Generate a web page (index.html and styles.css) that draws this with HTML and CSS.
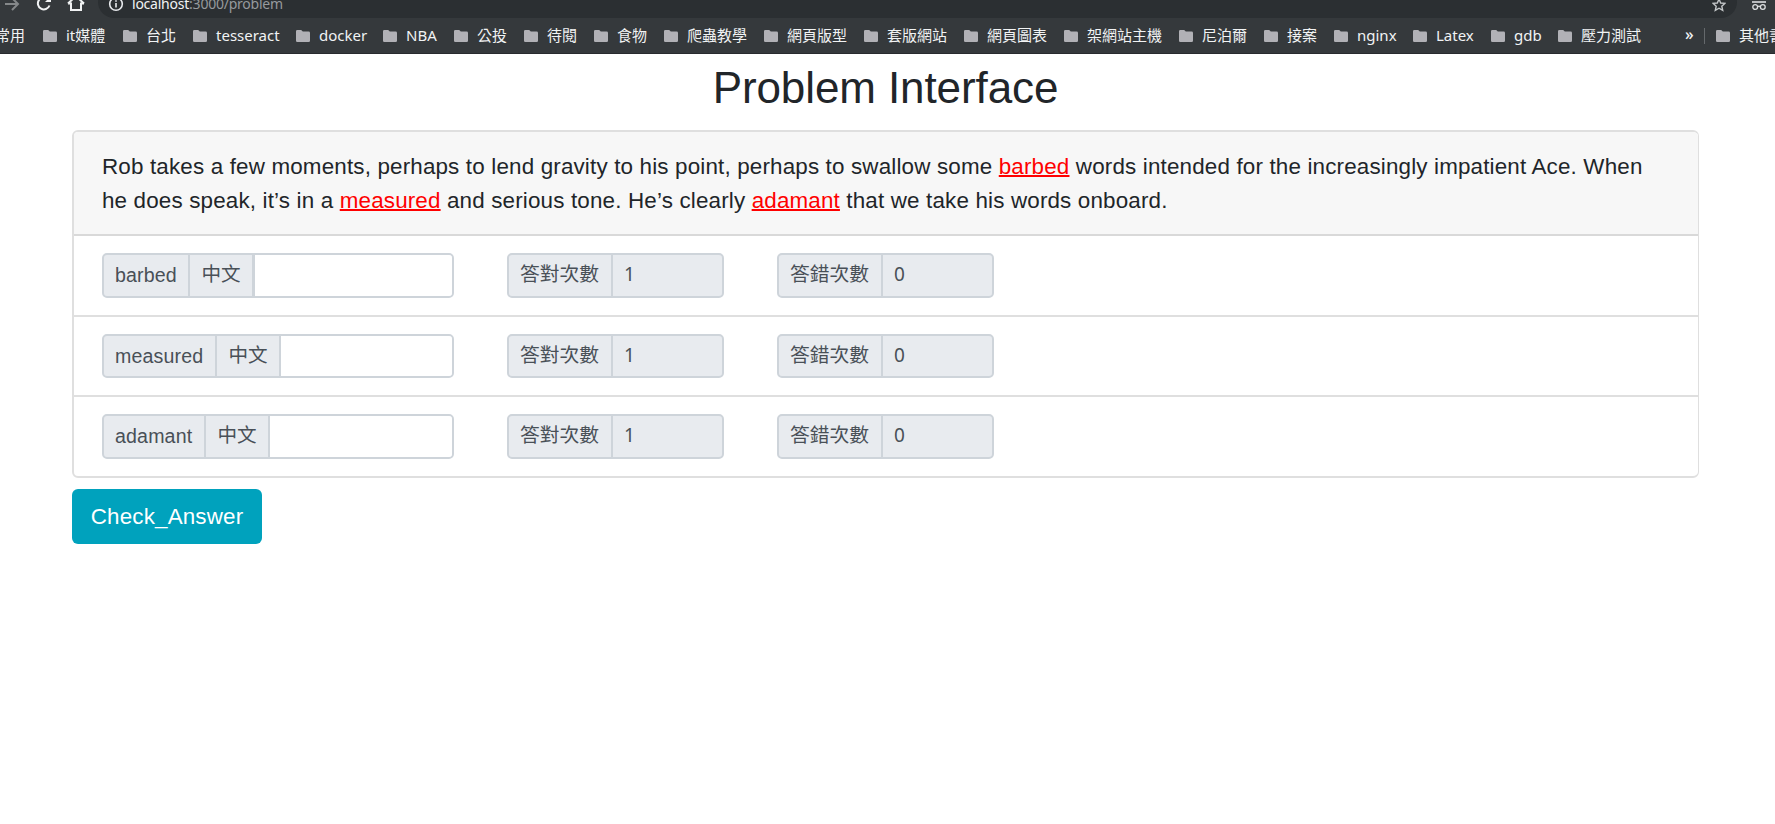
FILE: index.html
```html
<!DOCTYPE html>
<html lang="zh-Hant">
<head>
<meta charset="utf-8">
<title>Problem Interface</title>
<link rel="stylesheet" href="styles.css">
</head>
<body>
<svg class="defs" width="0" height="0"><symbol id="folder" viewBox="0 0 14 12"><path d="M1.3 0H5.2L6.8 1.6H12.7Q14 1.6 14 2.9V10.7Q14 12 12.7 12H1.3Q0 12 0 10.7V1.3Q0 0 1.3 0Z"/></symbol></svg>
<header class="chrome">
  <div class="toolbar">
    <svg class="nav" width="98" height="18" viewBox="0 0 98 18" fill="none" stroke="#f1f3f4" stroke-width="2">
      <path stroke="#85888a" d="M5 4H17M12 -2L18 4L12 10"/>
      <path d="M49.5 5.5A6 6 0 1 1 48 -1"/><path fill="#f1f3f4" stroke="none" d="M45 2H51V-4Z"/>
      <path d="M68 3.5H71V10H81V3.5H84M68 3.5L76 -4L84 3.5"/>
    </svg>
    <div class="omnibox">
      <svg width="16" height="16" viewBox="0 0 16 16" fill="none" stroke="#e8eaed" stroke-width="1.6"><circle cx="8" cy="8" r="6.3"/><path d="M8 7V11.5M8 4.2V5.8"/></svg>
      <span class="url"><b>localhost</b>:3000/problem</span>
      <svg class="star" width="14" height="14" viewBox="0 0 14 14" fill="none" stroke="#c4c7c9" stroke-width="1.4"><path d="M7 1.2L8.7 5L12.9 5.4L9.8 8.2L10.7 12.4L7 10.2L3.3 12.4L4.2 8.2L1.1 5.4L5.3 5Z"/></svg>
    </div>
    <svg class="incognito" width="14" height="12" viewBox="0 0 14 12" fill="none" stroke="#dcdee0" stroke-width="1.3"><path d="M0 2H14" stroke-width="1.6"/><circle cx="3.2" cy="7" r="2.4"/><circle cx="10.8" cy="7" r="2.4"/><path d="M5.6 6.6Q7 5.8 8.4 6.6"/></svg>
  </div>
  <nav class="bookmarks">
    <span class="item first">常用</span>
    <span class="item"><svg><use href="#folder"/></svg>it媒體</span>
    <span class="item"><svg><use href="#folder"/></svg>台北</span>
    <span class="item"><svg><use href="#folder"/></svg>tesseract</span>
    <span class="item"><svg><use href="#folder"/></svg>docker</span>
    <span class="item"><svg><use href="#folder"/></svg>NBA</span>
    <span class="item"><svg><use href="#folder"/></svg>公投</span>
    <span class="item"><svg><use href="#folder"/></svg>待閱</span>
    <span class="item"><svg><use href="#folder"/></svg>食物</span>
    <span class="item"><svg><use href="#folder"/></svg>爬蟲教學</span>
    <span class="item"><svg><use href="#folder"/></svg>網頁版型</span>
    <span class="item"><svg><use href="#folder"/></svg>套版網站</span>
    <span class="item"><svg><use href="#folder"/></svg>網頁圖表</span>
    <span class="item"><svg><use href="#folder"/></svg>架網站主機</span>
    <span class="item"><svg><use href="#folder"/></svg>尼泊爾</span>
    <span class="item"><svg><use href="#folder"/></svg>接案</span>
    <span class="item"><svg><use href="#folder"/></svg>nginx</span>
    <span class="item"><svg><use href="#folder"/></svg>Latex</span>
    <span class="item"><svg><use href="#folder"/></svg>gdb</span>
    <span class="item"><svg><use href="#folder"/></svg>壓力測試</span>
    <span class="more">»</span>
    <span class="item other"><svg><use href="#folder"/></svg>其他書籤</span>
  </nav>
</header>
<main class="page">
  <h1>Problem Interface</h1>
  <section class="card">
    <p class="passage">Rob takes a few moments, perhaps to lend gravity to his point, perhaps to swallow some <u>barbed</u> words intended for the increasingly impatient Ace. When<br>he does speak, it’s in a <u>measured</u> and serious tone. He’s clearly <u>adamant</u> that we take his words onboard.</p>
    <div class="row">
      <div class="group word"><span class="w1">barbed</span><span class="zh zh1">中文</span><input type="text"></div>
      <div class="group count"><span>答對次數</span><output>1</output></div>
      <div class="group count"><span>答錯次數</span><output>0</output></div>
    </div>
    <div class="row middle">
      <div class="group word"><span class="w2">measured</span><span class="zh">中文</span><input type="text"></div>
      <div class="group count"><span>答對次數</span><output>1</output></div>
      <div class="group count"><span>答錯次數</span><output>0</output></div>
    </div>
    <div class="row">
      <div class="group word"><span class="w3">adamant</span><span class="zh">中文</span><input type="text"></div>
      <div class="group count"><span>答對次數</span><output>1</output></div>
      <div class="group count"><span>答錯次數</span><output>0</output></div>
    </div>
  </section>
  <button class="check">Check_Answer</button>
</main>
</body>
</html>
```
FILE: styles.css
```css
* { box-sizing: border-box; }
body { margin: 0; height: 824px; overflow: hidden; background: #fff; color: #212529; font-family: "Liberation Sans", "Noto Sans CJK TC", sans-serif; }
.defs { display: block; }
.chrome { height: 54px; background: #35393c; border-bottom: 1px solid #282b2e; overflow: hidden; color: #f1f3f4; font-family: "Noto Sans", "Noto Sans CJK TC", sans-serif; }
.toolbar { display: flex; height: 18px; }
.nav { flex: none; }
.omnibox { display: flex; flex: none; width: 1639px; height: 18px; background: #2b2f32; border-radius: 0 0 16px 16px; padding-left: 10px; overflow: hidden; }
.omnibox svg { flex: none; margin-top: -4px; }
.url { margin: -6px 0 0 8px; font-size: 14px; line-height: 20px; letter-spacing: -0.23px; color: #969a9d; }
.url b { font-weight: 400; color: #f1f3f4; }
.omnibox .star { margin: -2px 11px 0 auto; }
.incognito { margin-left: 15px; }
.bookmarks { display: grid; grid-template-columns: 43px 80px 70px 103px 87px 71px 70px 70px 70px 100px 100px 100px 100px 115px 85px 70px 79px 78px 67px 127px 20px 90px; height: 35px; align-items: center; font-size: 15px; line-height: 22px; white-space: nowrap; }
.item { display: flex; align-items: center; gap: 9px; padding-bottom: 2px; }
.item svg { width: 14px; height: 12px; flex: none; fill: #b1b1b6; margin-top: 2px; }
.first { margin-left: -5px; }
.more { height: 16px; line-height: 13px; border-right: 1px solid #65696c; font-size: 16px; font-weight: 500; }
.other { margin-left: 11px; }
.page { width: 1627px; margin-left: 72px; }
h1 { margin: 0; height: 76px; padding-top: 7px; font-size: 44px; line-height: 54px; letter-spacing: -0.1px; font-weight: 400; text-align: center; }
.card { height: 348px; border: 2px solid #dfdfdf; border-right-width: 1px; border-radius: 6px; overflow: hidden; }
.passage { margin: 0; height: 104px; padding: 18px 28px 0; background: #f7f7f7; border-bottom: 2px solid #d9d9d9; font-size: 22.4px; line-height: 34px; letter-spacing: 0.165px; white-space: nowrap; }
.passage u { color: #f00; text-decoration-thickness: 2px; }
.row { display: flex; height: 81px; padding: 17px 28px 0; border-bottom: 2px solid #dfdfdf; }
.row.middle { height: 80px; }
.row:last-child { border: 0; }
.group { display: flex; flex: none; height: 45px; border: 2px solid #ced4da; border-radius: 5px; overflow: hidden; background: #e8ebef; color: #495057; font-size: 19.6px; line-height: 40px; }
.middle .group { height: 44px; }
.group span { flex: none; padding-left: 11px; border-right: 2px solid #ced4da; white-space: nowrap; }
.word { width: 352px; margin-right: 53px; }
.group .w1 { width: 86px; letter-spacing: 0.15px; }
.group .w2 { width: 113px; letter-spacing: 0.15px; }
.group .w3 { width: 102px; letter-spacing: 0.15px; }
.group .zh { width: 64px; padding-left: 11.5px; line-height: 39px; }
.group .zh1 { width: 65px; border-right-width: 3px; }
.word input { flex: 1; min-width: 0; border: 0; padding: 0 11px; background: #fff; font: inherit; color: inherit; outline: 0; }
.count { width: 217px; margin-right: 53px; }
.group.count span { width: 104px; font-size: 19.8px; line-height: 39px; }
.count output { padding-left: 11px; font-family: "Noto Sans", sans-serif; font-size: 19px; line-height: 39px; }
.check { display: block; width: 190px; height: 55px; margin-top: 11px; padding: 0; border: 0; border-radius: 6px; background: #00a2bd; color: #fff; font: 22.4px "Liberation Sans", sans-serif; letter-spacing: 0.17px; }
```
